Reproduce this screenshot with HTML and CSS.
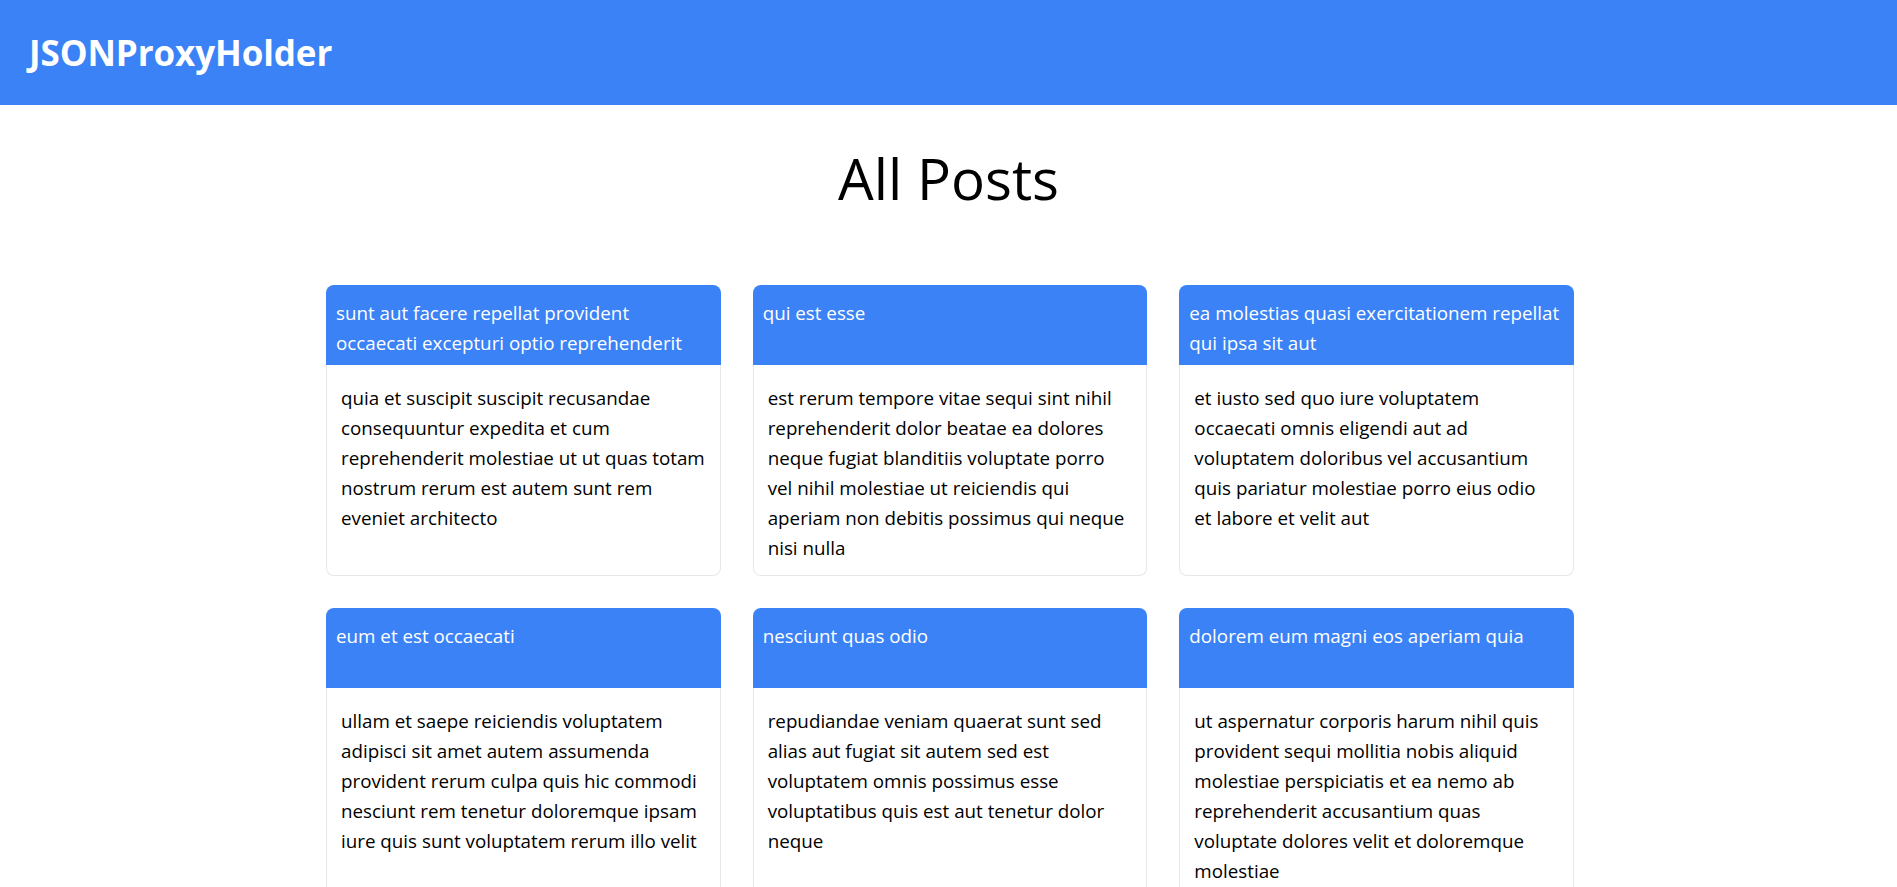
FILE: index.html
```html
<!DOCTYPE html>
<html lang="en">
<head>
<meta charset="utf-8">
<title>JSONProxyHolder</title>
<link rel="stylesheet" href="styles.css">
</head>
<body>
<header class="navbar">
  <a class="brand" href="#">JSONProxyHolder</a>
</header>
<main class="page">
  <h1 class="page-title">All Posts</h1>
  <section class="posts">
    <article class="card">
      <h2 class="card-title">sunt aut facere repellat provident<br>occaecati excepturi optio reprehenderit</h2>
      <p class="card-body">quia et suscipit suscipit recusandae<br>consequuntur expedita et cum<br>reprehenderit molestiae ut ut quas totam<br>nostrum rerum est autem sunt rem<br>eveniet architecto</p>
    </article>
    <article class="card">
      <h2 class="card-title">qui est esse</h2>
      <p class="card-body">est rerum tempore vitae sequi sint nihil<br>reprehenderit dolor beatae ea dolores<br>neque fugiat blanditiis voluptate porro<br>vel nihil molestiae ut reiciendis qui<br>aperiam non debitis possimus qui neque<br>nisi nulla</p>
    </article>
    <article class="card">
      <h2 class="card-title">ea molestias quasi exercitationem repellat<br>qui ipsa sit aut</h2>
      <p class="card-body">et iusto sed quo iure voluptatem<br>occaecati omnis eligendi aut ad<br>voluptatem doloribus vel accusantium<br>quis pariatur molestiae porro eius odio<br>et labore et velit aut</p>
    </article>
    <article class="card">
      <h2 class="card-title">eum et est occaecati</h2>
      <p class="card-body">ullam et saepe reiciendis voluptatem<br>adipisci sit amet autem assumenda<br>provident rerum culpa quis hic commodi<br>nesciunt rem tenetur doloremque ipsam<br>iure quis sunt voluptatem rerum illo velit</p>
    </article>
    <article class="card">
      <h2 class="card-title">nesciunt quas odio</h2>
      <p class="card-body">repudiandae veniam quaerat sunt sed<br>alias aut fugiat sit autem sed est<br>voluptatem omnis possimus esse<br>voluptatibus quis est aut tenetur dolor<br>neque</p>
    </article>
    <article class="card">
      <h2 class="card-title">dolorem eum magni eos aperiam quia</h2>
      <p class="card-body">ut aspernatur corporis harum nihil quis<br>provident sequi mollitia nobis aliquid<br>molestiae perspiciatis et ea nemo ab<br>reprehenderit accusantium quas<br>voluptate dolores velit et doloremque<br>molestiae</p>
    </article>
  </section>
</main>
</body>
</html>
```

FILE: styles.css
```css
* { box-sizing: border-box; }

html, body {
  margin: 0;
  padding: 0;
  background: #ffffff;
  color: #000000;
  font-family: "Open Sans", "Noto Sans", sans-serif;
}

.navbar {
  height: 105px;
  background: #3b82f6;
  padding: 33px 29px 32px;
}

.brand {
  display: block;
  color: #ffffff;
  text-decoration: none;
  font-size: 35px;
  font-weight: 700;
  line-height: 40px;
  letter-spacing: -0.1px;
}

.page {
  padding: 46px 0 40px;
}

.page-title {
  margin: 0;
  text-align: center;
  font-size: 56.5px;
  font-weight: 400;
  line-height: 56px;
}

.posts {
  width: 1248px;
  margin: 78px auto 0;
  position: relative;
  left: 1.5px;
  display: grid;
  grid-template-columns: repeat(3, 1fr);
  gap: 32px;
}

.card {
  display: flex;
  flex-direction: column;
  border-radius: 8px;
}

.card-title {
  margin: 0;
  height: 80px;
  padding: 13px 10px 7px;
  background: #3b82f6;
  color: #ffffff;
  border-radius: 8px 8px 0 0;
  font-size: 18.8px;
  font-weight: 400;
  line-height: 30px;
  white-space: nowrap;
}

.card-body {
  margin: 0;
  flex: 1;
  padding: 17.5px 14px 12.5px;
  border: 1px solid #e5e7eb;
  border-top: none;
  border-radius: 0 0 8px 8px;
  font-size: 18.8px;
  line-height: 30px;
  white-space: nowrap;
}
```
